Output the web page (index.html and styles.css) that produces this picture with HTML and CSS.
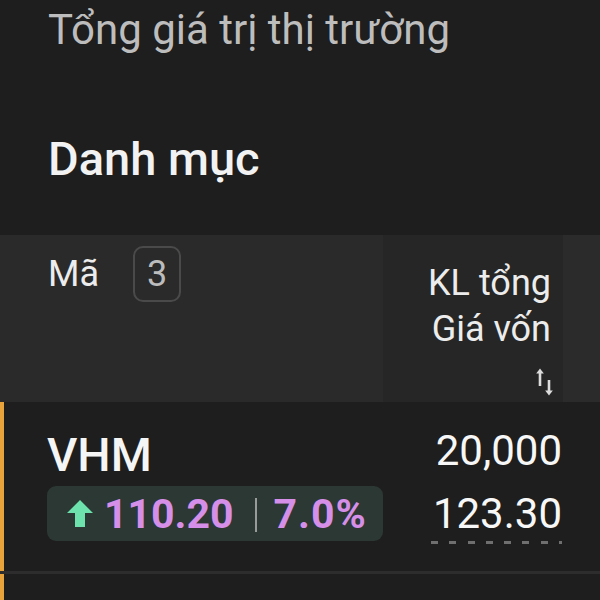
FILE: index.html
```html
<!DOCTYPE html>
<html lang="vi">
<head>
    <meta charset="UTF-8">
    <meta name="viewport" content="width=device-width, initial-scale=1.0">
    <title>Danh mục</title>
    <link rel="stylesheet" href="styles.css">
</head>
<body>
    <p class="summary">Tổng giá trị thị trường</p>

    <h2 class="section-title">Danh mục</h2>

    <div class="portfolio">
        <div class="thead">
            <div class="th th-code">
                <span>Mã</span>
                <span class="count">3</span>
            </div>
            <div class="th th-qty">
                <div>KL tổng</div>
                <div>Giá vốn</div>
                <svg class="sort-icon" width="20" height="30" viewBox="0 0 20 30">
                    <path d="M5 19 V4" stroke="#dcdcdc" stroke-width="2.6" fill="none"/>
                    <path d="M1.2 6.5 L5 1.5 L8.8 6.5 Z" fill="#dcdcdc"/>
                    <path d="M14 13 V26" stroke="#dcdcdc" stroke-width="2.6" fill="none"/>
                    <path d="M10.2 23.5 L14 28.5 L17.8 23.5 Z" fill="#dcdcdc"/>
                </svg>
            </div>
            <div class="th th-more"></div>
        </div>

        <div class="row">
            <div class="cell cell-code">
                <div class="symbol">VHM</div>
                <div class="change">
                    <svg class="up-arrow" width="26" height="27" viewBox="0 0 26 27">
                        <path d="M13 0 L26 13 H18 V27 H8 V13 H0 Z" fill="#6de2ad"/>
                    </svg>
                    <span class="price">110.20</span>
                    <span class="pipe"></span>
                    <span class="pct">7.0%</span>
                </div>
            </div>
            <div class="cell cell-qty">
                <div class="qty">20,000</div>
                <div class="cost">123.30</div>
                <div class="dashes"></div>
            </div>
            <div class="cell"></div>
        </div>

        <div class="row row-next"></div>
    </div>
</body>
</html>
```

FILE: styles.css
```css
body {
    margin: 0;
    background-color: #1e1e1e;
    font-family: Roboto, "Liberation Sans", Arial, sans-serif;
    color: #f2f2f2;
    overflow: hidden;
}
.summary {
    margin: 0;
    padding: 5px 0 0 48px;
    font-size: 42px;
    line-height: 50px;
    color: #bdbdbd;
}
.section-title {
    margin: 77px 0 0;
    padding-left: 48px;
    font-size: 47px;
    line-height: 54px;
    font-weight: 500;
    color: #f2f2f2;
}
.portfolio {
    margin-top: 49px;
    display: flex;
    flex-direction: column;
    background: #2d2d2d;
}
.thead {
    display: grid;
    grid-template-columns: 383px 180px 1fr;
    height: 167px;
    background: #2a2a2a;
}
.th {
    font-size: 36px;
    line-height: 46px;
    color: #ececec;
}
.th-code {
    display: flex;
    align-items: center;
    align-self: start;
    gap: 34px;
    padding: 11px 0 0 48px;
}
.count {
    width: 44px;
    height: 52px;
    border: 2px solid #4a4a4a;
    border-radius: 10px;
    display: flex;
    align-items: center;
    justify-content: center;
    font-size: 36px;
    color: #bcbcbc;
}
.th-qty {
    background: #262626;
    display: flex;
    flex-direction: column;
    align-items: flex-end;
    padding: 25px 12px 0 0;
}
.sort-icon {
    margin-top: auto;
    margin-right: -4px;
    margin-bottom: 5px;
}
.th-more {
    background: #2b2b2b;
}
.row {
    display: grid;
    grid-template-columns: 379px 180px 1fr;
    height: 169px;
    background: #1e1e1e;
    border-left: 4px solid #e8a43b;
}
.cell-code {
    padding: 26px 0 0 43px;
}
.symbol {
    font-size: 47px;
    line-height: 54px;
    font-weight: 500;
    color: #f5f5f5;
}
.change {
    margin-top: 4px;
    width: 336px;
    height: 55px;
    box-sizing: border-box;
    padding-left: 20px;
    display: flex;
    align-items: center;
    background: #2b3833;
    border-radius: 9px;
    font-size: 41px;
    font-weight: 700;
    color: #d68fe8;
}
.up-arrow {
    margin-right: 11px;
}
.pipe {
    width: 2px;
    height: 34px;
    margin: 2px 17px 0 21px;
    background: #9a9a9a;
}
.pct {
    letter-spacing: 1px;
}
.cell-qty {
    display: flex;
    flex-direction: column;
    align-items: flex-end;
    padding: 24px 1px 0 0;
    font-size: 42px;
    line-height: 50px;
    color: #f7f7f7;
}
.cost {
    margin-top: 13px;
}
.dashes {
    width: 131px;
    height: 3px;
    margin-top: 2px;
    background: repeating-linear-gradient(90deg, #6f6f6f 0 7px, transparent 7px 18.3px);
}
.row-next {
    margin-top: 3px;
    height: 40px;
}
```
